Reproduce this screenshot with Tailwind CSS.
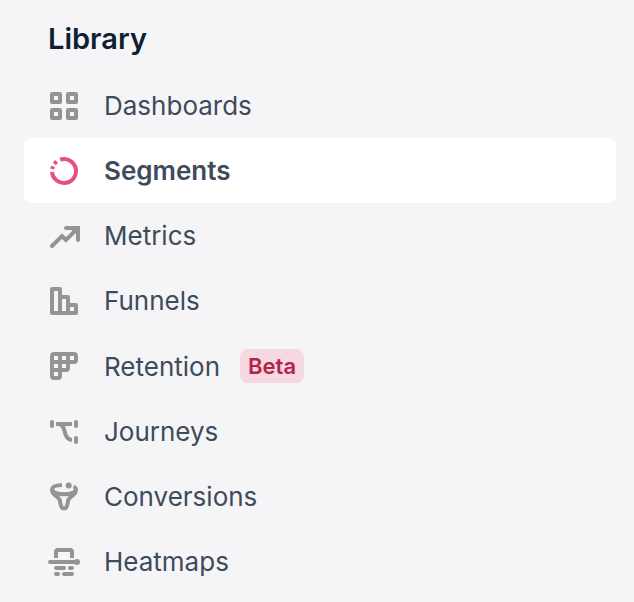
<!DOCTYPE html>
<html lang="en">
<head>
  <meta charset="UTF-8">
  <meta name="viewport" content="width=device-width, initial-scale=1.0">
  <title>Library</title>
  <script src="https://cdn.jsdelivr.net/npm/@tailwindcss/browser@4"></script>
</head>
<body class="bg-[#f5f5f8] font-['Inter',sans-serif] text-[#3d4b5a]">
  <!-- Sidebar -->
  <nav aria-labelledby="library-title" class="pl-6 pr-[18px] pt-5">
    <h2 id="library-title" class="px-6 mb-4 text-[29px] leading-[37px] font-semibold text-[#0f1f33]">Library</h2>

    <ul class="text-[26px] leading-[33px]">
      <li>
        <a href="#dashboards" class="flex gap-6 px-6 py-4 rounded-lg">
          <svg class="w-8 h-8 mt-px shrink-0 text-[#949494]" viewBox="0 0 32 32" fill="none" stroke="currentColor" stroke-width="4" aria-hidden="true">
            <path stroke-linejoin="round" d="M4 4h8v8H4zM20 4h8v8h-8zM4 20h8v8H4zM20 20h8v8h-8z"/>
          </svg>
          <span>Dashboards</span>
        </a>
      </li>
      <li>
        <a href="#segments" aria-current="page" class="flex gap-6 px-6 py-4 rounded-lg bg-white font-semibold">
          <svg class="w-8 h-8 mt-px shrink-0 text-[#e5517e]" viewBox="0 0 32 32" fill="none" stroke="currentColor" stroke-width="4" aria-hidden="true">
            <path d="M12.1 4.65A12 12 0 1 1 4.04 17"/>
            <path d="M6.3 8.8 8.6 6.5M4.2 14 5 11.4"/>
          </svg>
          <span>Segments</span>
        </a>
      </li>
      <li>
        <a href="#metrics" class="flex gap-6 px-6 py-4 rounded-lg">
          <svg class="w-8 h-8 mt-px shrink-0 text-[#949494]" viewBox="0 0 32 32" fill="none" stroke="currentColor" stroke-width="4" stroke-linecap="round" aria-hidden="true">
            <path d="M4 26 14 16l4 4L29 9M18 8h12v12"/>
            <path d="M22 8h8v8z" fill="currentColor" stroke="none"/>
          </svg>
          <span>Metrics</span>
        </a>
      </li>
      <li>
        <a href="#funnels" class="flex gap-6 px-6 py-4 rounded-lg">
          <svg class="w-8 h-8 mt-px shrink-0 text-[#949494]" viewBox="0 0 32 32" fill="none" stroke="currentColor" stroke-width="4" stroke-linejoin="round" aria-hidden="true">
            <path d="M4 4h8v24H4zM12 12h8v16h-8zM20 20h8v8h-8z"/>
          </svg>
          <span>Funnels</span>
        </a>
      </li>
      <li>
        <a href="#retention" class="flex gap-6 px-6 py-4 rounded-lg">
          <svg class="w-8 h-8 mt-px shrink-0 text-[#949494]" viewBox="0 0 32 32" fill="currentColor" fill-rule="evenodd" aria-hidden="true">
            <path d="M6 2h20a4 4 0 0 1 4 4v4a4 4 0 0 1-4 4h-4v4a4 4 0 0 1-4 4h-4v4a4 4 0 0 1-4 4H6a4 4 0 0 1-4-4V6a4 4 0 0 1 4-4zM6 6v4h4V6zM14 6v4h4V6zM22 6v4h4V6zM6 14v4h4v-4zM14 14v4h4v-4zM6 22v4h4v-4z"/>
          </svg>
          <span class="flex items-center gap-5">
            <span>Retention</span>
            <span class="px-2 rounded-lg bg-[#f6d8e2] text-[22px] leading-[34px] font-semibold text-[#b3244b]">Beta</span>
          </span>
        </a>
      </li>
      <li>
        <a href="#journeys" class="flex gap-6 px-6 py-4 rounded-lg">
          <svg class="w-8 h-8 mt-px shrink-0 text-[#949494]" viewBox="0 0 32 32" fill="none" stroke="currentColor" stroke-width="4" aria-hidden="true">
            <path stroke-linecap="round" d="M4 6v4M28 6v4M28 22v4"/>
            <path d="M8 8h16M11 8c8 1 3 15 13 16"/>
          </svg>
          <span>Journeys</span>
        </a>
      </li>
      <li>
        <a href="#conversions" class="flex gap-6 px-6 py-4 rounded-lg">
          <svg class="w-8 h-8 mt-px shrink-0 text-[#949494]" viewBox="0 0 32 32" fill="none" stroke="currentColor" stroke-width="4" aria-hidden="true">
            <path d="M14 4C8 4.300 4 5.800 4 8.500c0 7 7.500 6.500 8 11.500.4 4 1 7.500 4 7.500s3.600-3.500 4-7.500c.5-5 8-4.500 8-11.500 0-1.500-.8-2.300-2.500-3"/>
            <path d="M4 9.500C6 12 10 13.300 16 13.300s10-1.300 12-3.800"/>
            <circle cx="20.700" cy="4.500" r="3" fill="currentColor" stroke="none"/>
          </svg>
          <span>Conversions</span>
        </a>
      </li>
      <li>
        <a href="#heatmaps" class="flex gap-6 px-6 py-4 rounded-lg">
          <svg class="w-8 h-8 mt-px shrink-0 text-[#949494]" viewBox="0 0 32 32" fill="none" stroke="currentColor" stroke-width="4" aria-hidden="true">
            <path d="M8 12V6a2 2 0 0 1 2-2h12a2 2 0 0 1 2 2v6"/>
            <path stroke-linecap="round" d="M2 16h27M8 22h8M22 22h2M8 28h2M16 28h8"/>
            <circle cx="29" cy="16" r="3" fill="currentColor" stroke="none"/>
          </svg>
          <span>Heatmaps</span>
        </a>
      </li>
    </ul>
  </nav>
</body>
</html>
